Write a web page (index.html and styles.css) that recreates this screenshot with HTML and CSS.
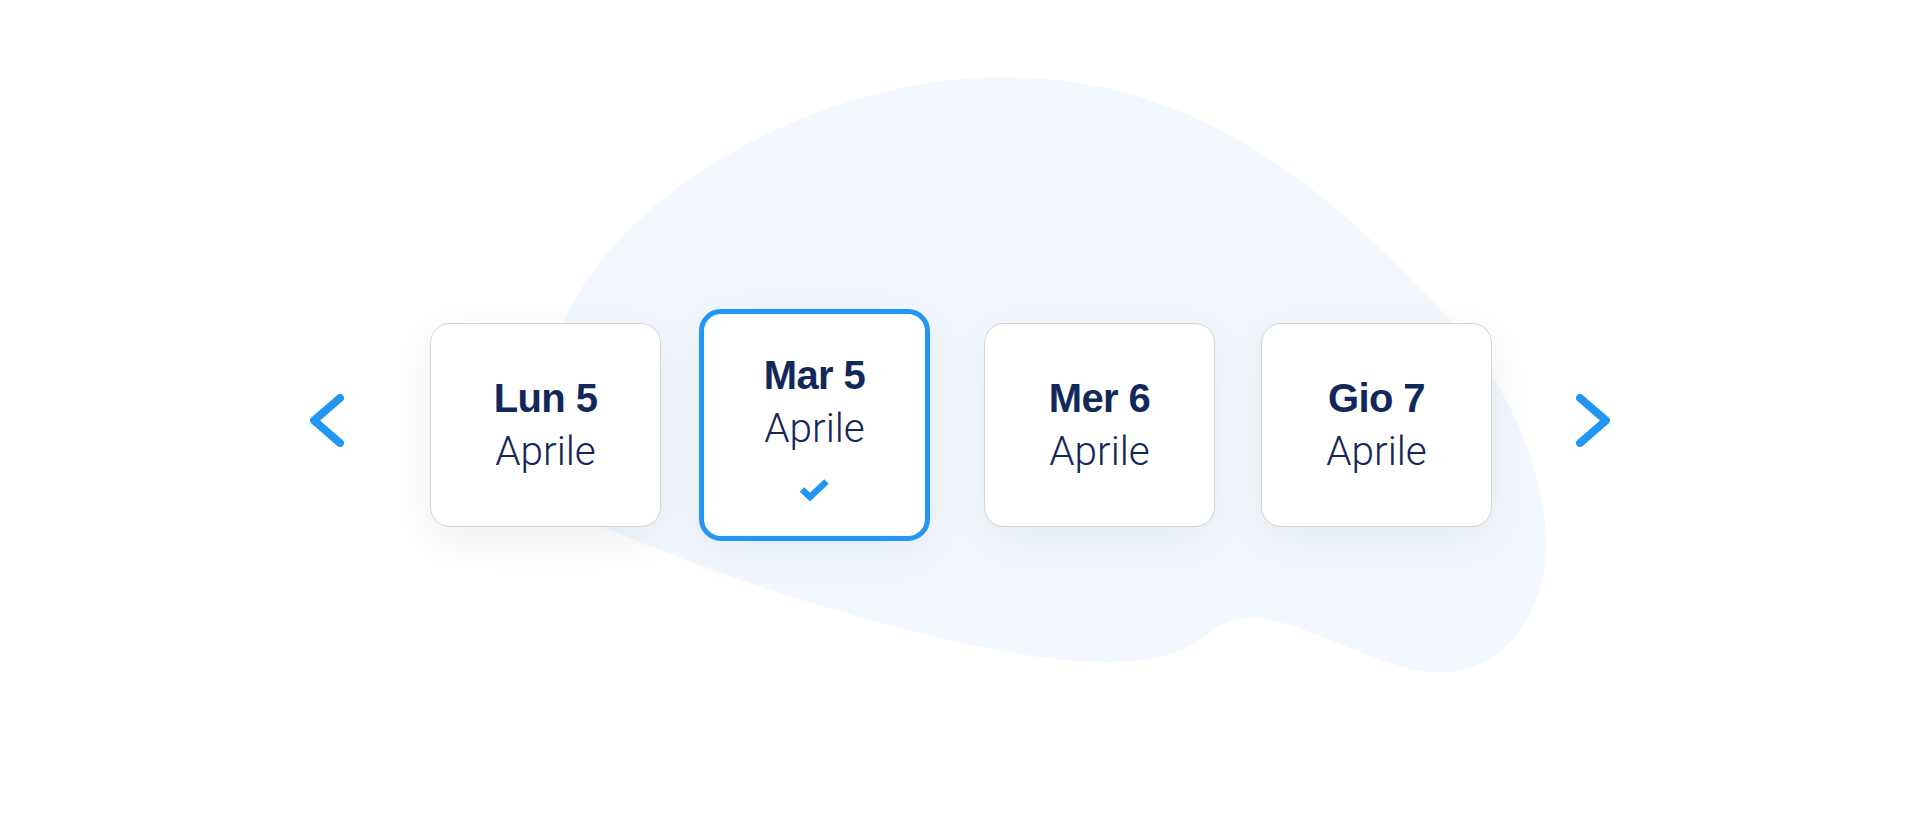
FILE: index.html
```html
<!DOCTYPE html>
<html lang="it">
<head>
<meta charset="utf-8">
<title>Scegli il giorno</title>
<link rel="stylesheet" href="styles.css">
</head>
<body>
<div class="page">
  <svg class="blob" viewBox="0 0 1920 823" width="1920" height="823" aria-hidden="true">
    <path d="M 1004 77 C 1200 77 1330 190 1450 320 C 1530 410 1560 520 1540 590 C 1520 650 1480 675 1433 672 C 1370 668 1290 610 1240 619 C 1200 625 1205 665 1095 662 C 1000 660 800 610 603 527 C 565 480 545 390 563 323 C 620 190 820 77 1004 77 Z"/>
  </svg>
  <div class="picker">
    <button class="nav nav-prev" aria-label="Precedente">
      <svg width="34" height="53" viewBox="0 0 34 53"><path d="M30 4 L4 26.5 L30 49"/></svg>
    </button>
    <ul class="days">
      <li class="day">
        <span class="day-name">Lun 5</span>
        <span class="day-month">Aprile</span>
      </li>
      <li class="day selected">
        <span class="day-name">Mar 5</span>
        <span class="day-month">Aprile</span>
        <svg class="check" width="32" height="25" viewBox="0 0 32 25"><path d="M3 12.5 L11 20 L27.5 4.5"/></svg>
      </li>
      <li class="day">
        <span class="day-name">Mer 6</span>
        <span class="day-month">Aprile</span>
      </li>
      <li class="day">
        <span class="day-name">Gio 7</span>
        <span class="day-month">Aprile</span>
      </li>
    </ul>
    <button class="nav nav-next" aria-label="Successivo">
      <svg width="34" height="53" viewBox="0 0 34 53"><path d="M4 4 L30 26.5 L4 49"/></svg>
    </button>
  </div>
</div>
</body>
</html>
```
FILE: styles.css
```css
* { box-sizing: border-box; }

html, body {
  margin: 0;
  padding: 0;
  background: #ffffff;
}

body {
  font-family: "Liberation Sans", Arial, sans-serif;
  color: #13285a;
}

.page {
  position: relative;
  width: 100%;
  height: 823px;
  overflow: hidden;
}

.blob {
  position: absolute;
  top: 0;
  left: 0;
  z-index: 0;
}

.blob path {
  fill: #f3f8fe;
}

.picker {
  position: relative;
  z-index: 1;
  height: 823px;
  padding-top: 27px;
  display: flex;
  align-items: center;
  justify-content: center;
}

.nav {
  display: flex;
  padding: 0;
  border: 0;
  background: none;
  cursor: pointer;
  margin-bottom: 10px;
}

.nav path {
  fill: none;
  stroke: #2196f3;
  stroke-width: 8;
  stroke-linecap: round;
  stroke-linejoin: round;
}

.nav-prev { margin-right: 86px; }
.nav-next { margin-left: 84px; }

.days {
  list-style: none;
  margin: 0;
  padding: 0;
  display: flex;
  align-items: center;
  gap: 46px;
}

.day {
  width: 231px;
  height: 204px;
  background: #ffffff;
  border: 1px solid #d3d3d3;
  border-radius: 20px;
  box-shadow: 0 12px 44px rgba(10, 25, 60, 0.07);
  display: flex;
  flex-direction: column;
  align-items: center;
  justify-content: center;
}

.day.selected {
  height: 232px;
  border: 5px solid #2196f3;
  border-radius: 22px;
  margin: 0 8px 0 -8px;
}

.day-name {
  font-family: "Liberation Sans", Arial, sans-serif;
  font-weight: 700;
  font-size: 40px;
  line-height: 53px;
  letter-spacing: -0.6px;
}

.day-month {
  font-family: Roboto, "Liberation Sans", sans-serif;
  font-weight: 300;
  font-size: 40.5px;
  line-height: 53px;
}

.check {
  margin-top: 22px;
}

.check path {
  fill: none;
  stroke: #2196f3;
  stroke-width: 6.5;
  stroke-linecap: butt;
  stroke-linejoin: miter;
}
```
